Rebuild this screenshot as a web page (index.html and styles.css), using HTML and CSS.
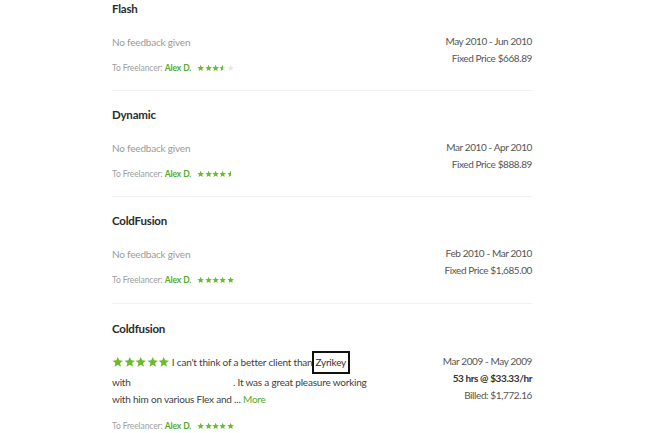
FILE: index.html
```html
<!DOCTYPE html>
<html lang="en">
<head>
    <meta charset="UTF-8">
    <meta name="viewport" content="width=device-width, initial-scale=1.0">
    <title>Work History and Feedback</title>
    <link rel="stylesheet" href="styles.css">
</head>
<body>
    <svg class="defs" width="0" height="0">
        <defs>
            <symbol id="star" viewBox="0 0 24 24">
                <polygon points="12,1.5 15.1,8.6 22.8,9.2 16.9,14.2 18.7,21.8 12,17.8 5.3,21.8 7.1,14.2 1.2,9.2 8.9,8.6"/>
            </symbol>
            <linearGradient id="half">
                <stop offset="50%" stop-color="#6cbb2f"/>
                <stop offset="50%" stop-color="#e6e6e6"/>
            </linearGradient>
            <linearGradient id="halfFaint">
                <stop offset="50%" stop-color="#6cbb2f"/>
                <stop offset="50%" stop-color="#fafafa"/>
            </linearGradient>
        </defs>
    </svg>

    <div class="history">
        <div class="job">
            <h3 class="job-title">Flash</h3>
            <div class="job-row">
                <div class="job-main">
                    <p class="comment empty">No feedback given</p>
                    <p class="freelancer">To Freelancer: <a href="#">Alex D.</a>
                        <span class="stars">
                            <svg><use href="#star"/></svg><svg><use href="#star"/></svg><svg><use href="#star"/></svg><svg class="half"><use href="#star"/></svg><svg class="off"><use href="#star"/></svg>
                        </span>
                    </p>
                </div>
                <div class="job-meta">
                    <div>May 2010 - Jun 2010</div>
                    <div>Fixed Price $668.89</div>
                </div>
            </div>
        </div>

        <div class="job">
            <h3 class="job-title">Dynamic</h3>
            <div class="job-row">
                <div class="job-main">
                    <p class="comment empty">No feedback given</p>
                    <p class="freelancer">To Freelancer: <a href="#">Alex D.</a>
                        <span class="stars">
                            <svg><use href="#star"/></svg><svg><use href="#star"/></svg><svg><use href="#star"/></svg><svg><use href="#star"/></svg><svg class="half-faint"><use href="#star"/></svg>
                        </span>
                    </p>
                </div>
                <div class="job-meta">
                    <div>Mar 2010 - Apr 2010</div>
                    <div>Fixed Price $888.89</div>
                </div>
            </div>
        </div>

        <div class="job">
            <h3 class="job-title">ColdFusion</h3>
            <div class="job-row">
                <div class="job-main">
                    <p class="comment empty">No feedback given</p>
                    <p class="freelancer">To Freelancer: <a href="#">Alex D.</a>
                        <span class="stars">
                            <svg><use href="#star"/></svg><svg><use href="#star"/></svg><svg><use href="#star"/></svg><svg><use href="#star"/></svg><svg><use href="#star"/></svg>
                        </span>
                    </p>
                </div>
                <div class="job-meta">
                    <div>Feb 2010 - Mar 2010</div>
                    <div>Fixed Price $1,685.00</div>
                </div>
            </div>
        </div>

        <div class="job with-review">
            <h3 class="job-title">Coldfusion</h3>
            <div class="job-row">
                <div class="job-main">
                    <p class="comment">
                        <span class="stars big"><svg><use href="#star"/></svg><svg><use href="#star"/></svg><svg><use href="#star"/></svg><svg><use href="#star"/></svg><svg><use href="#star"/></svg></span>
                        I can't think of a better client than<span class="marked">Zyrikey</span><br>
                        with <span class="hidden-name"></span>. It was a great pleasure working<br>
                        with him on various Flex and ... <a href="#" class="more">More</a>
                    </p>
                    <p class="freelancer">To Freelancer: <a href="#">Alex D.</a>
                        <span class="stars">
                            <svg><use href="#star"/></svg><svg><use href="#star"/></svg><svg><use href="#star"/></svg><svg><use href="#star"/></svg><svg><use href="#star"/></svg>
                        </span>
                    </p>
                </div>
                <div class="job-meta">
                    <div>Mar 2009 - May 2009</div>
                    <div class="hours">53 hrs @ $33.33/hr</div>
                    <div>Billed: $1,772.16</div>
                </div>
            </div>
        </div>
    </div>
</body>
</html>
```

FILE: styles.css
```css
body {
    margin: 0;
    padding: 0;
    background: #fff;
    font-family: Lato, "Open Sans", sans-serif;
    color: #333;
}

.defs {
    position: absolute;
}

.history {
    width: 420px;
    margin-left: 112px;
}

.job {
    padding: 16px 0 14px;
    border-bottom: 1px solid #f1f1f1;
}

.job:first-child {
    padding-top: 1px;
}

.job:nth-child(3) {
    padding-bottom: 15px;
}

.job:last-child {
    padding-top: 17px;
}

.job-title {
    margin: 0;
    font-size: 11.5px;
    letter-spacing: -0.2px;
    line-height: 16px;
    font-weight: bold;
    color: #2b2b2b;
}

.job-row {
    display: flex;
    justify-content: space-between;
    margin-top: 16px;
}

.with-review .job-row {
    margin-top: 14px;
}

.with-review .job-meta {
    margin-top: 2px;
}

.with-review .freelancer {
    margin-top: 9.5px;
}

.job-main {
    flex: 1;
}

.comment {
    margin: 0;
    font-size: 10px;
    letter-spacing: -0.2px;
    line-height: 17px;
    color: #404040;
}

.comment.empty {
    line-height: 18px;
    color: #9a9a9a;
}

.freelancer {
    margin: 9px 0 0;
    font-size: 8.5px;
    letter-spacing: -0.1px;
    line-height: 16px;
    color: #a0a0a0;
}

.freelancer a {
    color: #55a92c;
    font-weight: bold;
    text-decoration: none;
}

.stars {
    display: inline-flex;
    margin-left: 4px;
    vertical-align: -1px;
}

.stars svg {
    width: 7.3px;
    height: 8px;
    fill: #6cbb2f;
}

.stars svg.half {
    fill: url(#half);
}

.stars svg.half-faint {
    fill: url(#halfFaint);
}

.stars svg.off {
    fill: #e6e6e6;
}

.stars.big {
    margin-left: 0;
    vertical-align: -2px;
}

.stars.big svg {
    width: 11.5px;
    height: 12px;
}

.marked {
    display: inline-block;
    padding: 1px 2px 1px 1px;
    border: 2px solid #111;
    line-height: 17px;
    color: #333;
}

.hidden-name {
    display: inline-block;
    width: 100px;
}

.more {
    color: #55a92c;
    text-decoration: none;
}

.job-meta {
    text-align: right;
    font-size: 10px;
    letter-spacing: -0.4px;
    line-height: 17px;
    color: #555;
}

.job-meta .hours {
    font-weight: bold;
    color: #333;
}
```
